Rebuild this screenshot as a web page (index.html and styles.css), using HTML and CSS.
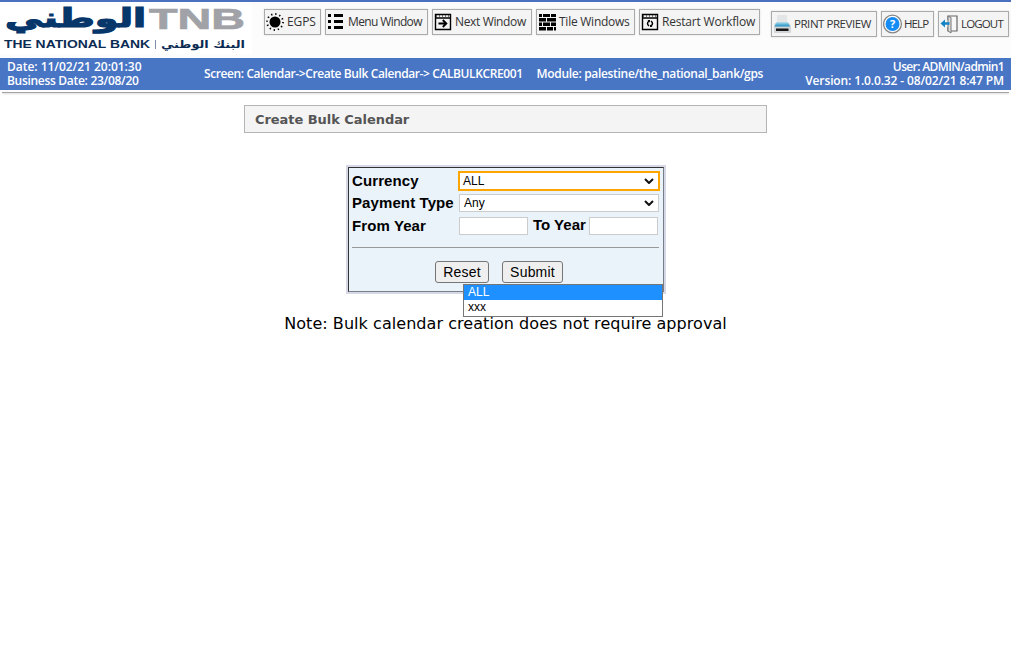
FILE: index.html
```html
<!DOCTYPE html>
<html lang="en">
<head>
<meta charset="utf-8">
<title>Create Bulk Calendar</title>
<link rel="stylesheet" href="styles.css">
</head>
<body>
<header class="top">
  <svg class="logo" width="252" height="52" viewBox="0 0 252 52">
    <rect width="252" height="52" fill="#fff"/>
    <text class="logo-ar" x="146" y="25" direction="rtl" textLength="141" lengthAdjust="spacingAndGlyphs">الوطني</text>
    <text class="logo-tnb" x="149" y="27" textLength="96" lengthAdjust="spacingAndGlyphs">TNB</text>
    <text class="logo-en" x="4" y="46" textLength="146" lengthAdjust="spacingAndGlyphs">THE NATIONAL BANK</text>
    <rect x="155" y="38" width="1" height="9" fill="#7d8da5"/>
    <text class="logo-sub" x="245" y="46" direction="rtl" textLength="84" lengthAdjust="spacingAndGlyphs">البنك الوطني</text>
  </svg>
  <nav class="tools">
    <button class="tool egps">
      <svg width="20" height="20" viewBox="0 0 20 20"><circle cx="9" cy="10" r="5.5"/><circle cx="9" cy="10" r="8" fill="none" stroke="#000" stroke-width="1.8" stroke-dasharray="1.300 2.890"/></svg>
      <span>EGPS</span>
    </button>
    <button class="tool menu">
      <svg width="20" height="20" viewBox="0 0 20 20"><path d="M1 2h3v3H1zM1 8h3v3H1zM1 14h3v3H1zM7 2h9v3H7zM7 8h9v3H7zM7 14h9v3H7z"/></svg>
      <span>Menu Window</span>
    </button>
    <button class="tool next">
      <svg width="20" height="20" viewBox="0 0 20 20"><path d="M1.500 2.500h15v15h-15zM1.500 6h15" fill="none" stroke="#000" stroke-width="1.400"/><path d="M2 4h14" stroke="#000" stroke-dasharray="1 2"/><path d="M4.500 11.500H12M8.800 8l3.500 3.500L8.800 15" fill="none" stroke="#000" stroke-width="1.900"/></svg>
      <span>Next Window</span>
    </button>
    <button class="tool tile">
      <svg width="20" height="20" viewBox="0 0 20 20"><path d="M1 2h3v3H1zM5 2h7v3H5zM13 2h5v3h-5zM1 6h7v3.500H1zM9 6h9v3.500H9zM1 10.500h3V14H1zM5 10.500h7V14H5zM13 10.500h5V14h-5zM1 15h7v3.500H1zM9 15h6v3.500H9zM16 15h2v3.500h-2z"/></svg>
      <span>Tile Windows</span>
    </button>
    <button class="tool restart">
      <svg width="20" height="20" viewBox="0 0 20 20"><path d="M1.500 2.500h15v15h-15zM1.500 6h15" fill="none" stroke="#000" stroke-width="1.400"/><path d="M2 4h14" stroke="#000" stroke-dasharray="1 2"/><path d="M8 9q-3 2.500 0 5M10 9q3 2.500 0 5" fill="none" stroke="#000" stroke-width="1.500"/><path d="M6.500 8H9v2.500zM11.500 15H9v-2.500z"/></svg>
      <span>Restart Workflow</span>
    </button>
  </nav>
  <nav class="tools side">
    <button class="tool print">
      <svg width="20" height="20" viewBox="0 0 20 20"><defs><linearGradient id="pg" x2="0" y2="1"><stop stop-color="#b9dfee"/><stop offset="1" stop-color="#168fc2"/></linearGradient></defs><path d="M4 1h10v7H4z" fill="#e4e5e7"/><path d="M2 9h14l2 3v6q0 1-1 1H2q-1 0-1-1v-6z" fill="#d2d4d7"/><path d="M3.500 8h11.500l2 4.500H1.500z" fill="url(#pg)"/><path d="M3 14.500h12.500V17H3z" fill="#171717"/></svg>
      <span>PRINT PREVIEW</span>
    </button>
    <button class="tool help">
      <svg width="20" height="20" viewBox="0 0 20 20"><circle cx="9.500" cy="10" r="8.900" fill="#fff" stroke="#858585" stroke-width="1.300"/><circle cx="9.500" cy="10" r="7" fill="#158cf5"/><text class="mark" x="9.500" y="14" text-anchor="middle">?</text></svg>
      <span>HELP</span>
    </button>
    <button class="tool logout">
      <svg width="20" height="20" viewBox="0 0 20 20"><path d="M8 6V2h9v15H8v-4" fill="#f7f7f7" stroke="#666" stroke-width="1.200"/><path d="M8 2 11 3.500V19l-3-2z" fill="#ddd" stroke="#777"/><path d="M.5 9.500 5 5.500v2.700h4.500v2.600H5v2.700z" fill="#1583c5"/></svg>
      <span>LOGOUT</span>
    </button>
  </nav>
</header>
<section class="status">
  <div class="dates"><span class="s-date">Date: 11/02/21 20:01:30</span><span class="s-bus">Business Date: 23/08/20</span></div>
  <div class="screen"><span class="s-screen">Screen: Calendar-&gt;Create Bulk Calendar-&gt; CALBULKCRE001</span><span class="s-module">Module: palestine/the_national_bank/gps</span></div>
  <div class="user"><span class="s-user">User: ADMIN/admin1</span><span class="s-version">Version: 1.0.0.32 - 08/02/21 8:47 PM</span></div>
</section>
<div class="rule"></div>
<main class="content">
  <h1 class="title"><span>Create Bulk Calendar</span></h1>
  <form class="panel">
    <div class="row currency"><label>Currency</label>
      <div class="select focused"><span>ALL</span><svg width="10" height="6" viewBox="0 0 10 6"><path d="m1 1 4 4 4-4"/></svg></div></div>
    <div class="row payment"><label>Payment Type</label>
      <div class="select"><span>Any</span><svg width="10" height="6" viewBox="0 0 10 6"><path d="m1 1 4 4 4-4"/></svg></div></div>
    <div class="row years"><label>From Year</label><input class="year" type="text"><label class="to">To Year</label><input class="year" type="text"></div>
    <div class="divider"></div>
    <div class="actions"><button class="action reset" type="button">Reset</button><button class="action submit" type="button">Submit</button></div>
    <div class="options"><div class="option active">ALL</div><div class="option">xxx</div></div>
  </form>
  <p class="note">Note: Bulk calendar creation does not require approval</p>
</main>
</body>
</html>
```
FILE: styles.css
```css
* { box-sizing: border-box; }
body { margin: 0; background: #fff; font-family: "Liberation Sans", Arial, sans-serif; color: #000; }
.top { display: flex; height: 58px; border-top: 2px solid #4a70bf; background: #fcfcfc; }
.logo { flex: none; display: block; }
.logo text { font-family: "DejaVu Sans", sans-serif; font-weight: bold; fill: #07366a; }
.logo .logo-ar { font-size: 26px; stroke: #07366a; stroke-width: 1.2px; }
.logo .logo-tnb { font-family: "Liberation Sans", sans-serif; font-size: 30px; fill: #a1a2a7; stroke: #a1a2a7; stroke-width: .7px; }
.logo .logo-en { font-family: "Liberation Sans", sans-serif; font-size: 10.5px; fill: #0b2b53; }
.logo .logo-sub { font-size: 11px; fill: #0b2b53; }
.tools { display: flex; gap: 4px; padding: 7px 0 0 12px; }
.side { padding: 9px 0 0 11px; }
.tool { display: flex; align-items: center; flex: none; height: 26px; margin: 0; padding: 0 0 0 1px; border: 1px solid #aaa; background: #f4f4f4; box-shadow: 0 0 2px #ddd; font: 12px "Open Sans", sans-serif; color: #333; white-space: nowrap; }
.tool svg { flex: none; margin-right: 1px; }
.tool span { position: relative; top: -1px; }
.tool .mark { font: bold 11px "Open Sans", sans-serif; fill: #fff; }
.egps { width: 57px; }
.menu { width: 103px; }
.next { width: 100px; }
.tile { width: 99px; }
.restart { width: 121px; }
.print { width: 106px; }
.help { width: 53px; }
.logout { width: 71px; }
.egps span { letter-spacing: -.1px; }
.menu span { letter-spacing: -.62px; }
.next span { letter-spacing: -.35px; }
.tile span { letter-spacing: -.25px; }
.restart span { letter-spacing: -.2px; }
.side .tool { font-size: 11.5px; }
.print span { letter-spacing: -.45px; }
.help span { letter-spacing: -.9px; }
.logout span { letter-spacing: -.85px; }
.status { display: flex; height: 32px; padding: 2px 7px; background: #4975c5; color: #fff; font: 600 12px/14px "Open Sans", sans-serif; white-space: nowrap; }
.dates, .user { display: flex; flex: none; flex-direction: column; align-items: flex-start; }
.dates { width: 197px; }
.user { width: 234px; align-items: flex-end; }
.screen { display: flex; flex: 1; gap: 14px; padding-top: 7px; }
.s-date { letter-spacing: -.03px; }
.s-bus { letter-spacing: -.3px; }
.s-screen { letter-spacing: -.4px; }
.s-module { letter-spacing: -.32px; }
.s-user { letter-spacing: -.63px; }
.s-version { letter-spacing: -.13px; }
.rule { height: 1px; margin: 2px 2px 0; background: #a4a4a4; box-shadow: 0 1px 2px #ccc; }
.content { display: flex; flex-direction: column; align-items: center; padding-top: 12px; }
.title { width: 523px; height: 28px; margin: 0; padding-left: 10px; border: 1px solid #b5b5b5; background: #f4f4f4; color: #555; font: bold 13px/28px "DejaVu Sans", sans-serif; }
.title span { letter-spacing: -.05px; }
.panel { position: relative; width: 316px; height: 125px; margin: 34px 0 0 1px; padding: 3px 4px 0 3px; border: 1px solid; border-color: #333 #777e8a #777e8a #333; outline: 2px solid #d6d9e5; background: #eaf2fa; }
.row { display: flex; font: bold 15px/20px "Liberation Sans", sans-serif; }
.row label { flex: none; width: 107px; letter-spacing: .1px; }
.select { display: flex; flex: none; align-items: center; justify-content: space-between; width: 200px; height: 18px; padding: 0 4px; border: 1px solid #ccc; background: #fff; font: 12px "Liberation Sans", sans-serif; }
.select.focused { width: 202px; height: 20px; margin-left: -1px; padding: 0 4px 0 3px; border: 2px solid #ffa500; }
.select svg { fill: none; stroke: #111; stroke-width: 2; }
.payment { padding-top: 3px; height: 23px; }
.payment label { margin-top: -1px; }
.years { padding-top: 3px; height: 23px; }
.years label { margin-top: -1px; }
.years .to { width: 61px; padding-left: 5px; margin-top: -2px; letter-spacing: 0; }
.year { flex: none; width: 69px; height: 18px; border: 1px solid #ccc; margin: 0; padding: 0; background: #fff; }
.divider { height: 1px; margin-top: 10px; background: #999; }
.actions { display: flex; gap: 13px; padding: 13px 0 0 83px; }
.action { height: 22px; padding: 0; border: 1px solid #767676; border-radius: 3px; background: #efefef; font: 14px "Liberation Sans", sans-serif; color: #000; letter-spacing: .2px; }
.reset { width: 54px; }
.submit { width: 61px; }
.options { position: absolute; left: 114px; top: 116px; width: 200px; height: 33px; border: 1px solid #767676; background: #fff; font: 12px/15px "Liberation Sans", sans-serif; }
.option { height: 15px; padding-left: 4px; }
.active { background: #1e90ff; color: #fff; }
.note { margin: 22px 0 0; font: 16px/20px "DejaVu Sans", sans-serif; letter-spacing: .055px; white-space: nowrap; }
```
